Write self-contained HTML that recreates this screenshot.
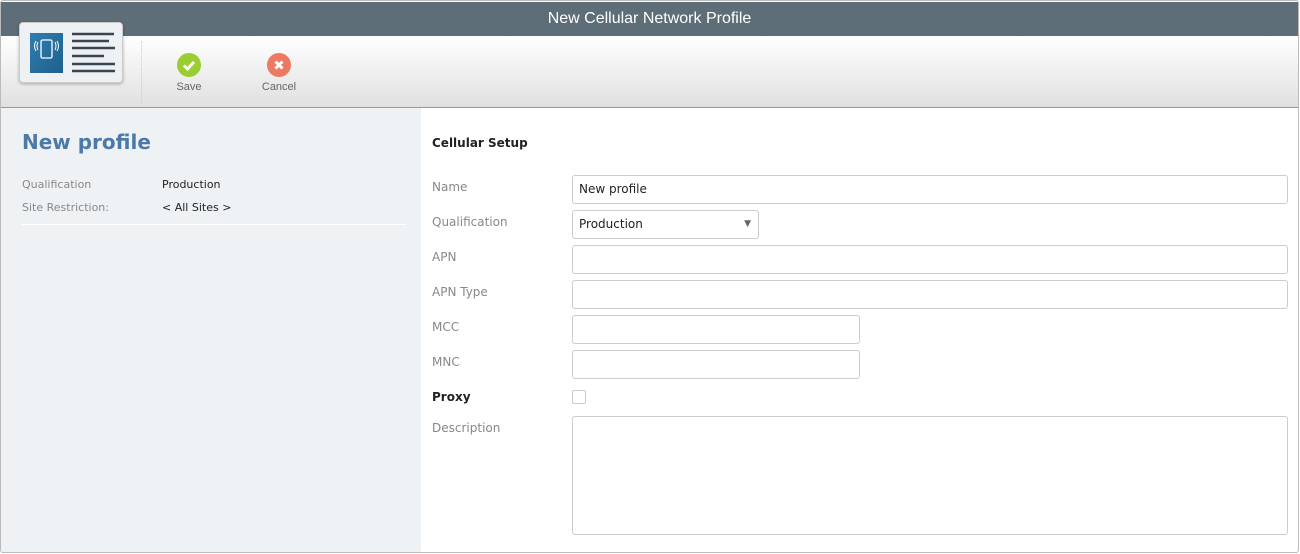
<!DOCTYPE html>
<html><head><style>
*{margin:0;padding:0;box-sizing:border-box}
body{width:1300px;height:554px;background:#fff;font-family:"DejaVu Sans","Liberation Sans",sans-serif;position:relative;overflow:hidden}
.frame{position:absolute;left:0;top:0;width:1299px;height:553px;border:1px solid #bbb;border-radius:3px;overflow:hidden}
.hdr{position:absolute;left:0;top:1px;width:100%;height:34px;background:#5e6e78;color:#fff;font-family:"Liberation Sans",sans-serif;font-size:16px;text-align:center;line-height:33px}
.tb{position:absolute;left:0;top:35px;width:100%;height:72px;background:linear-gradient(#fff,#e0e0e0);border-bottom:1px solid #999}
.card{position:absolute;left:18px;top:21px;width:104px;height:61px;background:#eef1f4;border:1px solid #ccc;border-radius:4px;box-shadow:0 1px 3px rgba(0,0,0,.3)}
.sep{position:absolute;left:140px;top:40px;height:62px;border-left:1px dotted #ccc}
.btn{position:absolute;top:52px;width:60px;text-align:center;font-size:11px;color:#666;font-family:"Liberation Sans",sans-serif}
.btn .c{width:24px;height:24px;border-radius:50%;margin:0 auto 4px}
.left{position:absolute;left:0;top:107px;width:420px;height:446px;background:#eff2f5}
.left h1{position:absolute;left:21px;top:22px;font-size:20px;color:#4b7aa8;font-weight:bold}
.lr{position:absolute;font-size:11px}
.lab{color:#888;font-size:12px;position:absolute;left:431px}
.inp{position:absolute;left:571px;height:29px;border:1px solid #ccc;border-radius:3px;background:#fff;font-size:12px;padding-left:6px;line-height:27px;color:#222}
</style></head><body>
<div class="frame">
<div class="hdr">New Cellular Network Profile</div>
<div class="tb"></div>
<div class="card">
<svg width="104" height="61" style="position:absolute;left:0;top:0">
<defs><linearGradient id="g" x1="0" y1="0" x2="1" y2="1"><stop offset="0" stop-color="#2f7fb0"/><stop offset="1" stop-color="#1f5f8c"/></linearGradient></defs>
<rect x="10" y="10" width="33" height="40" fill="url(#g)"/>
<rect x="21" y="17" width="11" height="18" rx="1.5" fill="none" stroke="#fff" stroke-width="1.3"/>
<path d="M18 19 q-2 4 0 8 M35 19 q2 4 0 8 M16 18 q-3 5 0 10 M37 18 q3 5 0 10" stroke="#fff" fill="none" stroke-width="1"/>
<g stroke="#3a4550" stroke-width="2.5"><line x1="52" y1="11" x2="94" y2="11"/><line x1="52" y1="18" x2="89" y2="18"/><line x1="52" y1="25" x2="95" y2="25"/><line x1="52" y1="33" x2="84" y2="33"/><line x1="52" y1="41" x2="95" y2="41"/><line x1="52" y1="48" x2="95" y2="48"/></g>
</svg></div>
<div class="sep"></div>
<div class="btn" style="left:158px"><div class="c" style="background:#9acd32"><svg width="24" height="24"><path d="M7 12.5l3.5 3.5 6.5-7" stroke="#fff" stroke-width="3" fill="none"/></svg></div>Save</div>
<div class="btn" style="left:248px"><div class="c" style="background:#ec7a62"><svg width="24" height="24"><path d="M8.5 8.5l7 7M15.5 8.5l-7 7" stroke="#fff" stroke-width="3" fill="none"/></svg></div>Cancel</div>
<div class="left">
<h1>New profile</h1>
<div class="lr" style="left:21px;top:70px;color:#888">Qualification</div>
<div class="lr" style="left:161px;top:70px;color:#222">Production</div>
<div class="lr" style="left:21px;top:93px;color:#888">Site Restriction:</div>
<div class="lr" style="left:161px;top:93px;color:#222">&lt; All Sites &gt;</div>
<div style="position:absolute;left:21px;top:116px;width:384px;border-top:1px solid #fff"></div>
</div>
<div class="lab" style="top:135px;color:#222;font-weight:bold;font-size:12px">Cellular Setup</div>
<div class="lab" style="top:179px">Name</div>
<div class="inp" style="top:174px;width:716px">New profile</div>
<div class="lab" style="top:214px">Qualification</div>
<div class="inp" style="top:209px;width:187px">Production<span style="position:absolute;right:7px;top:0;font-size:9px;color:#666">▼</span></div>
<div class="lab" style="top:249px">APN</div>
<div class="inp" style="top:244px;width:716px"></div>
<div class="lab" style="top:284px">APN Type</div>
<div class="inp" style="top:279px;width:716px"></div>
<div class="lab" style="top:319px">MCC</div>
<div class="inp" style="top:314px;width:288px"></div>
<div class="lab" style="top:354px">MNC</div>
<div class="inp" style="top:349px;width:288px"></div>
<div class="lab" style="top:389px;color:#222;font-weight:bold">Proxy</div>
<div class="inp" style="top:389px;width:14px;height:14px;border-radius:2px"></div>
<div class="lab" style="top:420px">Description</div>
<div class="inp" style="top:415px;width:716px;height:119px"></div>
</div>
</body></html>
